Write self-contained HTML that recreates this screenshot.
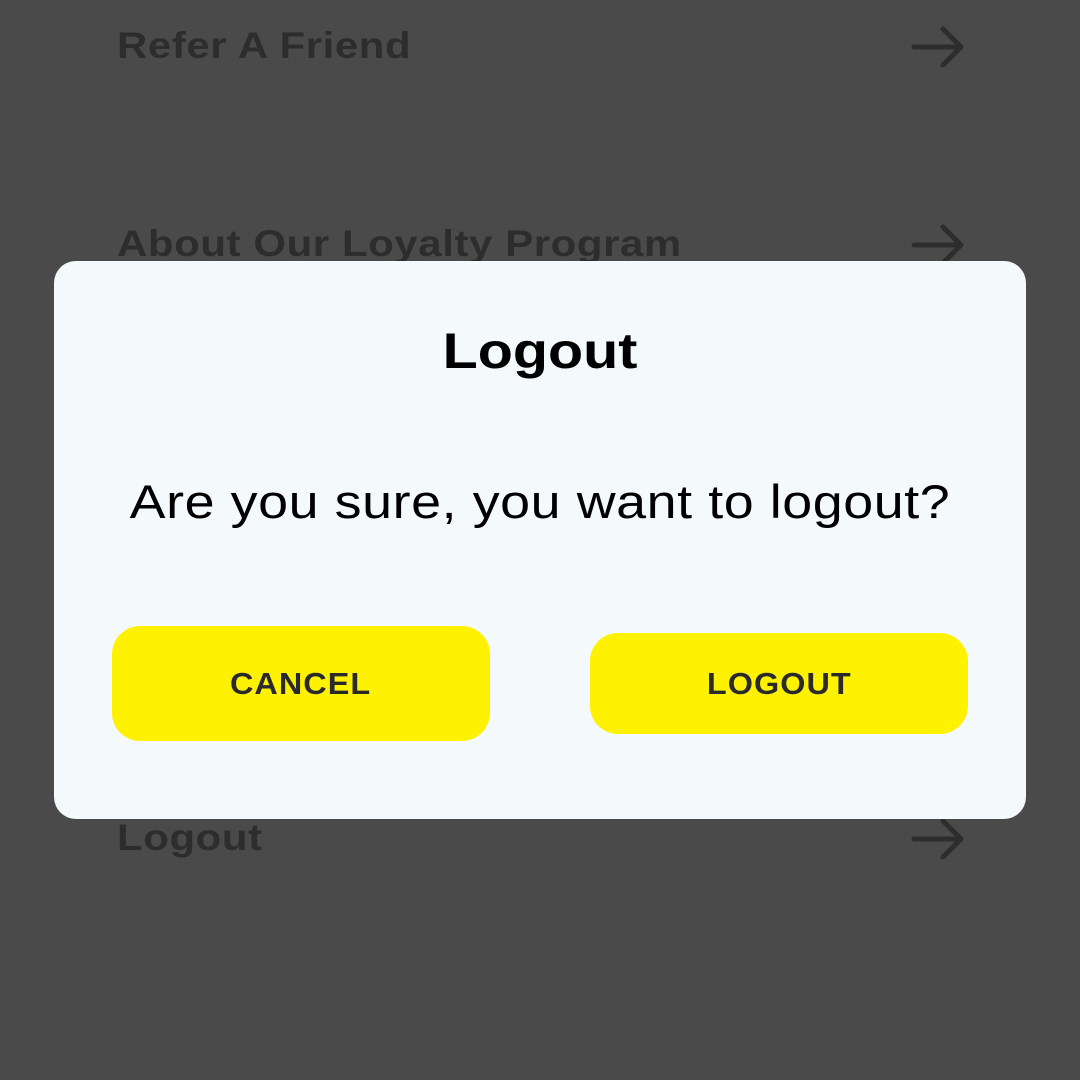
<!DOCTYPE html>
<html><head><style>
body{margin:0;width:1080px;height:1080px;background:#4a4a4a;position:relative;overflow:hidden;font-family:"Liberation Sans",sans-serif}
.m{position:absolute;left:117px;font-size:37px;font-weight:bold;color:#2d2d2d;letter-spacing:0.5px;white-space:nowrap;transform:scaleX(1.135);transform-origin:0 0}
.a{position:absolute;left:910px}
.d{position:absolute;left:54px;top:261px;width:972px;height:558px;background:#f4f9fb;border-radius:22px}
.t{position:absolute;width:100%;text-align:center;font-size:50px;font-weight:bold;color:#000;transform:scaleX(1.15)}
.q{position:absolute;width:100%;text-align:center;font-size:47px;color:#000;letter-spacing:0.5px;white-space:nowrap;transform:scaleX(1.145)}
.b{position:absolute;background:#fff200;border-radius:28px;font-size:31px;font-weight:bold;color:#2a2a2a;display:flex;align-items:center;justify-content:center;letter-spacing:1px}
.b span{display:inline-block;transform:scaleX(1.045)}
</style></head><body>
<div class="m" style="top:25px">Refer A Friend</div>
<div class="m" style="top:223px">About Our Loyalty Program</div>
<div class="m" style="top:817px">Logout</div>
<svg class="a" style="top:20px" width="60" height="60"><path d="M4 27H50M33 9L51 27L33 45" stroke="#2d2d2d" stroke-width="5" fill="none" stroke-linecap="round" stroke-linejoin="round"/></svg>
<svg class="a" style="top:218px" width="60" height="60"><path d="M4 27H50M33 9L51 27L33 45" stroke="#2d2d2d" stroke-width="5" fill="none" stroke-linecap="round" stroke-linejoin="round"/></svg>
<svg class="a" style="top:812px" width="60" height="60"><path d="M4 27H50M33 9L51 27L33 45" stroke="#2d2d2d" stroke-width="5" fill="none" stroke-linecap="round" stroke-linejoin="round"/></svg>
<div class="d">
<div class="t" style="top:61px">Logout</div>
<div class="q" style="top:213px">Are you sure, you want to logout?</div>
<div class="b" style="left:58px;top:365px;width:378px;height:115px"><span>CANCEL</span></div>
<div class="b" style="left:536px;top:372px;width:378px;height:101px"><span>LOGOUT</span></div>
</div>
</body></html>
